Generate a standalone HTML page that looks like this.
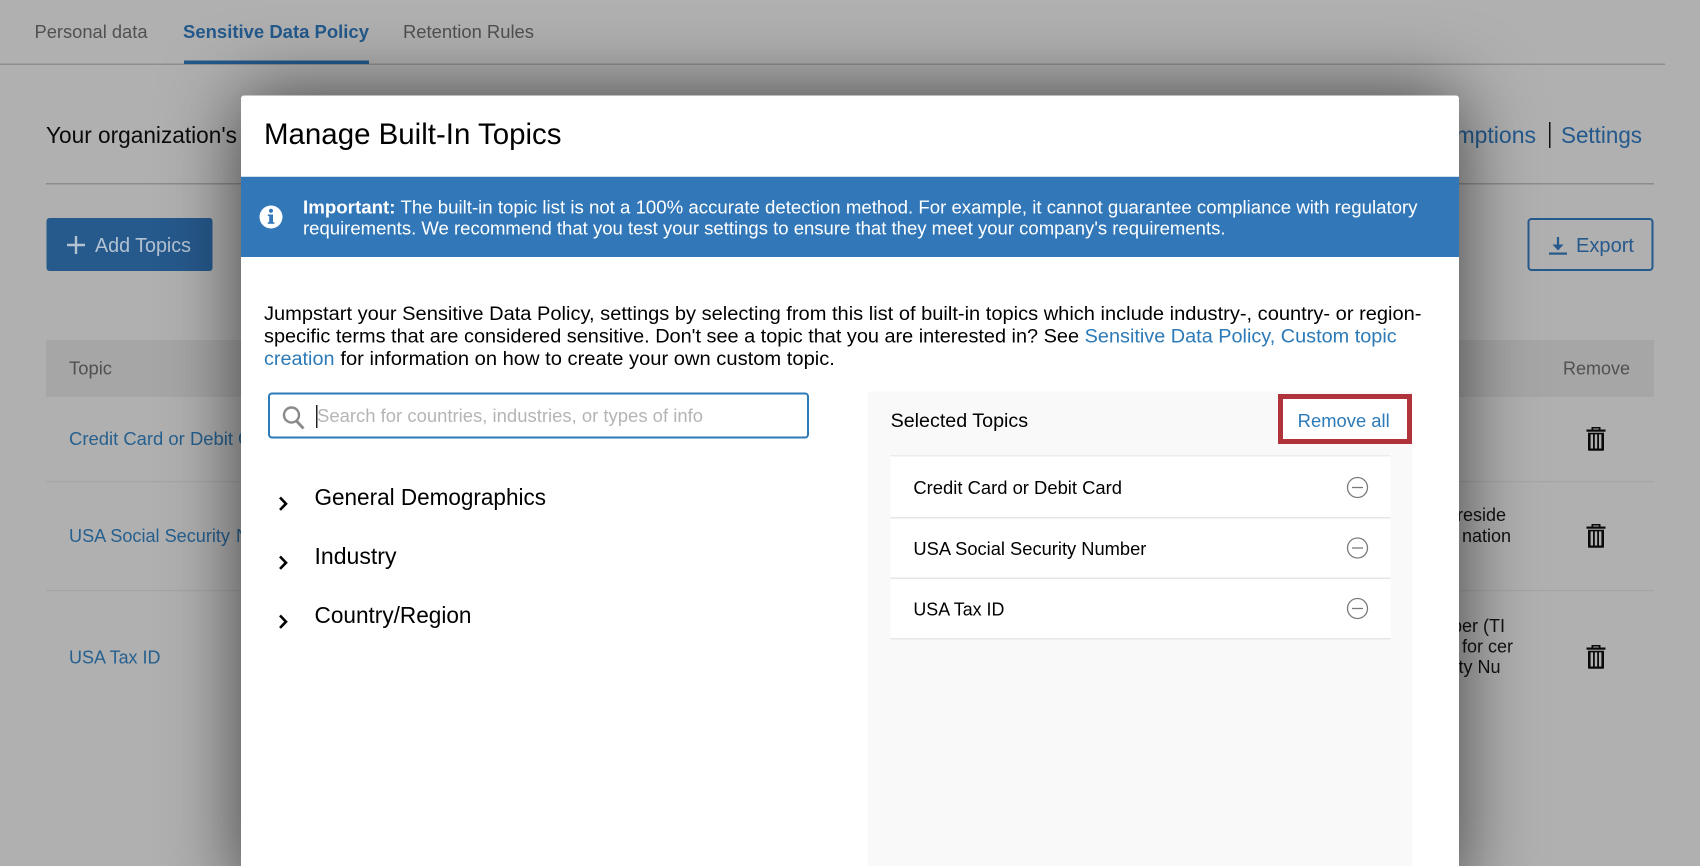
<!DOCTYPE html>
<html lang="en">
<head>
<meta charset="utf-8">
<title>Manage Built-In Topics</title>
<style>
html,body{margin:0;padding:0;width:1700px;height:866px;overflow:hidden;background:#b0b0b0}
svg{display:block;position:absolute;left:0;top:0}
text{font-family:"Liberation Sans",sans-serif;white-space:pre}
.b{fill:#000}
.bl{fill:#2c7ab7}
</style>
</head>
<body>
<svg width="1700" height="866" viewBox="0 0 1700 866" xmlns="http://www.w3.org/2000/svg">
<rect width="1700" height="866" fill="#b0b0b0"/>
<!-- tabs -->
<rect x="0" y="63.5" width="1665" height="1.5" fill="#8f8f8f"/>
<text x="34.5" y="38" font-size="18" fill="#505050" textLength="113" lengthAdjust="spacingAndGlyphs">Personal data</text>
<text x="183" y="38" font-size="18" font-weight="bold" fill="#23598c" textLength="186" lengthAdjust="spacingAndGlyphs">Sensitive Data Policy</text>
<text x="403" y="38" font-size="18" fill="#505050" textLength="131" lengthAdjust="spacingAndGlyphs">Retention Rules</text>
<rect x="184" y="60.5" width="185" height="3.5" fill="#23598c"/>
<!-- header row -->
<text x="46" y="143" font-size="23" fill="#0a0a0a" textLength="191" lengthAdjust="spacingAndGlyphs">Your organization's</text>
<text x="1536" y="143" font-size="23" fill="#23598c" text-anchor="end">Exemptions</text>
<rect x="1549" y="122" width="1.5" height="26" fill="#111"/>
<text x="1561" y="143" font-size="23" fill="#23598c" textLength="81" lengthAdjust="spacingAndGlyphs">Settings</text>
<rect x="46" y="183" width="1608" height="1.5" fill="#8c8c8c"/>
<!-- buttons -->
<rect x="46.5" y="218" width="166" height="53" rx="3" fill="#26598c"/>
<path d="M76 236v18M67 245h18" stroke="#b4c3d2" stroke-width="2.4" fill="none"/>
<text x="95" y="252" font-size="20" fill="#b4c3d2" textLength="96" lengthAdjust="spacingAndGlyphs">Add Topics</text>
<rect x="1528.5" y="219" width="124" height="51" rx="3" fill="none" stroke="#26598c" stroke-width="2"/>
<path d="M1558 237v10" stroke="#26598c" stroke-width="2.2" fill="none"/>
<path d="M1552.5 244.5h11L1558 250.5z" fill="#26598c"/>
<rect x="1549" y="252.5" width="18" height="2.2" fill="#26598c"/>
<text x="1576" y="252" font-size="20" fill="#26598c" textLength="58" lengthAdjust="spacingAndGlyphs">Export</text>
<!-- table -->
<rect x="46" y="340" width="1608" height="57" fill="#a6a6a6"/>
<text x="69" y="374.3" font-size="18" fill="#505050" textLength="43" lengthAdjust="spacingAndGlyphs">Topic</text>
<text x="1563" y="374.3" font-size="18" fill="#505050" textLength="67" lengthAdjust="spacingAndGlyphs">Remove</text>
<rect x="46" y="481" width="1608" height="1.2" fill="#a5a5a5"/>
<rect x="46" y="590" width="1608" height="1.2" fill="#a5a5a5"/>
<text x="69" y="445" font-size="18" fill="#26608f" textLength="164" lengthAdjust="spacingAndGlyphs">Credit Card or Debit</text>
<text x="238" y="445" font-size="18" fill="#26608f">Card</text>
<text x="69" y="542" font-size="18" fill="#26608f" textLength="161" lengthAdjust="spacingAndGlyphs">USA Social Security</text>
<text x="236" y="542" font-size="18" fill="#26608f">Number</text>
<text x="69" y="663.3" font-size="18" fill="#26608f" textLength="91.5" lengthAdjust="spacingAndGlyphs">USA Tax ID</text>
<text x="1506" y="521" font-size="18" fill="#111" text-anchor="end">reside</text>
<text x="1511" y="542" font-size="18" fill="#111" text-anchor="end">nation</text>
<text x="1505" y="632" font-size="18" fill="#111" text-anchor="end">per (TI</text>
<text x="1513" y="652.5" font-size="18" fill="#111" text-anchor="end">for cer</text>
<text x="1500.5" y="673" font-size="18" fill="#111" text-anchor="end">ty Nu</text>
<!-- trash icons -->
<g fill="#0a0a0a">
<g transform="translate(1596 439)">
<path d="M-4.5-9.5V-12h9v2.5h-1.7v-1h-5.6v1z"/>
<rect x="-9.5" y="-9.5" width="19" height="2.2"/>
<path fill-rule="evenodd" d="M-8-6.2H8V10.5a1.3 1.3 0 0 1-1.3 1.3H-6.7a1.3 1.3 0 0 1-1.3-1.3zM-5.4-4.6V9.5h2.4V-4.6zM-1.2-4.6V9.5h2.4V-4.6zM3-4.6V9.5h2.4V-4.6z"/>
</g>
<g transform="translate(1596 536)">
<path d="M-4.5-9.5V-12h9v2.5h-1.7v-1h-5.6v1z"/>
<rect x="-9.5" y="-9.5" width="19" height="2.2"/>
<path fill-rule="evenodd" d="M-8-6.2H8V10.5a1.3 1.3 0 0 1-1.3 1.3H-6.7a1.3 1.3 0 0 1-1.3-1.3zM-5.4-4.6V9.5h2.4V-4.6zM-1.2-4.6V9.5h2.4V-4.6zM3-4.6V9.5h2.4V-4.6z"/>
</g>
<g transform="translate(1596 657)">
<path d="M-4.5-9.5V-12h9v2.5h-1.7v-1h-5.6v1z"/>
<rect x="-9.5" y="-9.5" width="19" height="2.2"/>
<path fill-rule="evenodd" d="M-8-6.2H8V10.5a1.3 1.3 0 0 1-1.3 1.3H-6.7a1.3 1.3 0 0 1-1.3-1.3zM-5.4-4.6V9.5h2.4V-4.6zM-1.2-4.6V9.5h2.4V-4.6zM3-4.6V9.5h2.4V-4.6z"/>
</g>
</g>
<!-- modal -->
<rect x="241" y="95.5" width="1218" height="800" rx="3" fill="#fff" style="filter:drop-shadow(0 -1px 38px rgba(0,0,0,.62))"/>
<text x="264" y="144" font-size="30" fill="#000" textLength="297.5" lengthAdjust="spacingAndGlyphs">Manage Built-In Topics</text>
<!-- banner -->
<rect x="241" y="176" width="1218" height="1" fill="#cfe0ee"/>
<rect x="241" y="177" width="1218" height="80" fill="#3278b9"/>
<circle cx="271" cy="217" r="11.5" fill="#fff"/>
<rect x="269.2" y="214.5" width="3.8" height="9" fill="#3278b9"/>
<rect x="267.8" y="214.5" width="3" height="1.6" fill="#3278b9"/>
<rect x="267.8" y="222.2" width="6.6" height="1.6" fill="#3278b9"/>
<circle cx="271" cy="210.8" r="2.1" fill="#3278b9"/>
<text x="303" y="213.5" font-size="18" font-weight="bold" fill="#fff" textLength="92.5" lengthAdjust="spacingAndGlyphs">Important:</text>
<text x="400.5" y="213.5" font-size="18" fill="#fff" textLength="1017" lengthAdjust="spacingAndGlyphs">The built-in topic list is not a 100% accurate detection method. For example, it cannot guarantee compliance with regulatory</text>
<text x="303" y="234.5" font-size="18" fill="#fff" textLength="922.5" lengthAdjust="spacingAndGlyphs">requirements. We recommend that you test your settings to ensure that they meet your company's requirements.</text>
<!-- paragraph -->
<text x="264" y="320" font-size="19" class="b" textLength="1157.5" lengthAdjust="spacingAndGlyphs">Jumpstart your Sensitive Data Policy, settings by selecting from this list of built-in topics which include industry-, country- or region-</text>
<text x="264" y="342.5" font-size="19" class="b" textLength="815" lengthAdjust="spacingAndGlyphs">specific terms that are considered sensitive. Don't see a topic that you are interested in? See</text>
<text x="1084.7" y="342.5" font-size="19" class="bl" textLength="312" lengthAdjust="spacingAndGlyphs">Sensitive Data Policy, Custom topic</text>
<text x="264" y="365" font-size="19" class="bl" textLength="70.5" lengthAdjust="spacingAndGlyphs">creation</text>
<text x="340.4" y="365" font-size="19" class="b" textLength="494.5" lengthAdjust="spacingAndGlyphs">for information on how to create your own custom topic.</text>
<!-- search -->
<rect x="269" y="393.5" width="539" height="44" rx="3" fill="#fff" stroke="#2c7ab7" stroke-width="2"/>
<circle cx="291.5" cy="415" r="7.5" fill="none" stroke="#8a8a8a" stroke-width="2.4"/>
<path d="M296.5 421l7 7.5" stroke="#8a8a8a" stroke-width="2.8" fill="none"/>
<rect x="316" y="405" width="1.5" height="23" fill="#222"/>
<text x="317" y="422" font-size="18" fill="#b5b5b5" textLength="386" lengthAdjust="spacingAndGlyphs">Search for countries, industries, or types of info</text>
<!-- list -->
<g fill="none" stroke="#000" stroke-width="2.6">
<path d="M280 497.5l6 6.2-6 6.2"/>
<path d="M280 556.5l6 6.2-6 6.2"/>
<path d="M280 615.5l6 6.2-6 6.2"/>
</g>
<text x="314.5" y="505" font-size="23" fill="#000" textLength="231.5" lengthAdjust="spacingAndGlyphs">General Demographics</text>
<text x="314.5" y="564" font-size="23" fill="#000" textLength="82" lengthAdjust="spacingAndGlyphs">Industry</text>
<text x="314.5" y="623" font-size="23" fill="#000" textLength="157" lengthAdjust="spacingAndGlyphs">Country/Region</text>
<!-- selected panel -->
<rect x="867.5" y="391.5" width="545" height="480" fill="#f9f9f9"/>
<text x="890.6" y="427" font-size="19" fill="#000" textLength="137.5" lengthAdjust="spacingAndGlyphs">Selected Topics</text>
<rect x="1280.5" y="396.5" width="129" height="45" fill="#fff" stroke="#b0323a" stroke-width="5"/>
<text x="1297.7" y="427" font-size="18" class="bl" textLength="92" lengthAdjust="spacingAndGlyphs">Remove all</text>
<rect x="890.5" y="455.5" width="500" height="183" fill="#fff"/>
<rect x="890.5" y="455" width="500" height="1.5" fill="#ececec"/>
<rect x="890.5" y="517" width="500" height="1.5" fill="#e6e6e6"/>
<rect x="890.5" y="577.5" width="500" height="1.5" fill="#e6e6e6"/>
<rect x="890.5" y="638" width="500" height="1.5" fill="#e6e6e6"/>
<text x="913.4" y="494" font-size="18" fill="#000" textLength="208.6" lengthAdjust="spacingAndGlyphs">Credit Card or Debit Card</text>
<text x="913.4" y="554.8" font-size="18" fill="#000" textLength="233" lengthAdjust="spacingAndGlyphs">USA Social Security Number</text>
<text x="913.4" y="615.5" font-size="18" fill="#000" textLength="91" lengthAdjust="spacingAndGlyphs">USA Tax ID</text>
<g fill="none" stroke="#7a7a7a" stroke-width="1.3">
<circle cx="1357.5" cy="487.5" r="10"/><path d="M1352 487.5h11"/>
<circle cx="1357.5" cy="548" r="10"/><path d="M1352 548h11"/>
<circle cx="1357.5" cy="608.5" r="10"/><path d="M1352 608.5h11"/>
</g>
</svg>
</body>
</html>
